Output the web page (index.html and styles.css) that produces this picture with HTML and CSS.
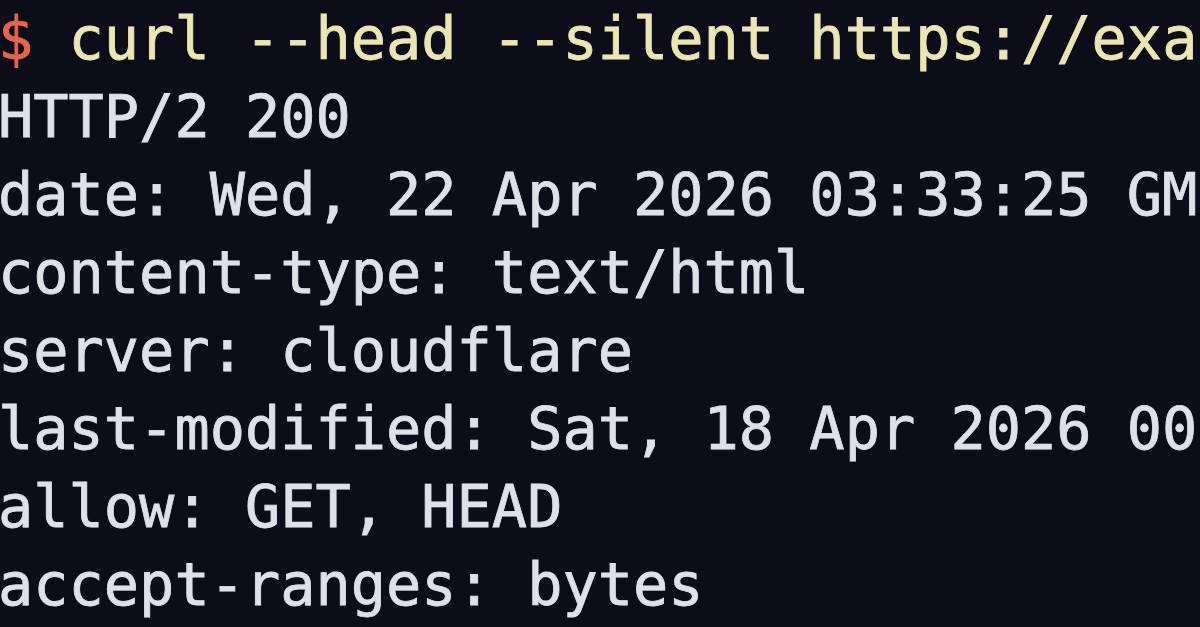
FILE: index.html
```html
<!DOCTYPE html>
<html>
<head>
<meta charset="utf-8">
<link rel="stylesheet" href="styles.css">
</head>
<body>
<div class="term">
  <div class="line"><span class="prompt">$</span> <span class="cmd">curl --head --silent https://exa</span></div>
  <div class="line out">HTTP/2 200</div>
  <div class="line out">date: Wed, 22 Apr 2026 03:33:25 GM</div>
  <div class="line out">content-type: text/html</div>
  <div class="line out">server: cloudflare</div>
  <div class="line out">last-modified: Sat, 18 Apr 2026 00</div>
  <div class="line out">allow: GET, HEAD</div>
  <div class="line out">accept-ranges: bytes</div>
</div>
</body>
</html>
```
FILE: styles.css
```css
html, body {
  margin: 0;
  padding: 0;
  width: 1200px;
  height: 627px;
  overflow: hidden;
  background: #0c0d18;
}
.term {
  margin-left: -2px;
  font-family: "DejaVu Sans Mono", "Liberation Mono", monospace;
  font-size: 58.6px;
  line-height: 78px;
  color: #dfe0e8;
  -webkit-text-stroke: 0.8px currentColor;
}
.line {
  height: 78px;
  white-space: pre;
}
.prompt {
  color: #e2654f;
}
.cmd {
  color: #ebe6b4;
}
```
